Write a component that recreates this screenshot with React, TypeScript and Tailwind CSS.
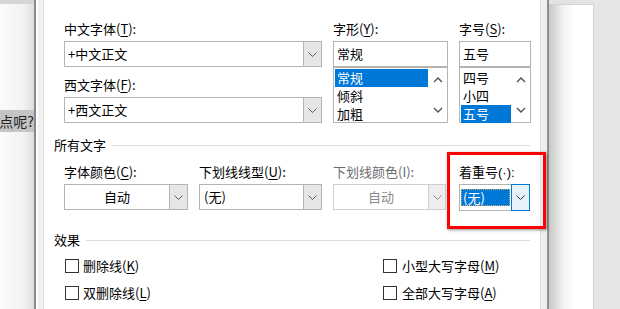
import React from "react";

const U = ({ children }: { children: React.ReactNode }) => (
  <span className="underline underline-offset-[2px]">{children}</span>
);

const ChevDown = ({ c = "#5a5a5a" }: { c?: string }) => (
  <svg width="9" height="5" viewBox="0 0 9 5">
    <path d="M0.5 0.5 L4.5 4.5 L8.5 0.5" fill="none" stroke={c} strokeWidth="1" />
  </svg>
);

const ScrollUp = () => (
  <svg width="10" height="6" viewBox="0 0 10 6">
    <path d="M1 5 L5 1 L9 5" fill="none" stroke="#505050" strokeWidth="1.4" />
  </svg>
);
const ScrollDown = () => (
  <svg width="10" height="6" viewBox="0 0 10 6">
    <path d="M1 1 L5 5 L9 1" fill="none" stroke="#505050" strokeWidth="1.4" />
  </svg>
);

const Label = ({ children, disabled }: { children: React.ReactNode; disabled?: boolean }) => (
  <div
    className={
      disabled
        ? "h-[16px] leading-[16px] text-[13px] mb-[4px] whitespace-nowrap text-[#6d6d6d]"
        : "h-[16px] leading-[16px] text-[13px] mb-[4px] whitespace-nowrap text-black"
    }
  >
    {children}
  </div>
);

const Check = ({ children, right }: { children: React.ReactNode; right?: boolean }) => (
  <div className={right ? "h-[18px] flex items-center gap-[5px]" : "h-[18px] flex items-center gap-[4px]"}>
    <div className="w-[14px] h-[14px] border border-[#333333] bg-white" />
    <span className="text-[13px] leading-[18px] text-black whitespace-nowrap">{children}</span>
  </div>
);

export default function App() {
  return (
    <div className="relative w-[620px] h-[309px] flex overflow-hidden bg-[#e6e6e6] font-['Noto_Sans_CJK_SC',sans-serif]">
      {/* left document strip */}
      <div className="w-[34px] flex flex-col">
        <div className="h-[4px] bg-[#d6d6d6]" />
        <div className="flex-1 flex flex-col bg-[linear-gradient(to_right,#fbfbfb,#f2f2f2_70%,#dedede)]">
          <div className="mt-[106px] h-[22px] bg-[#c4c4c4] flex justify-end overflow-hidden">
            <span className="text-[14px] leading-[22px] text-[#222] whitespace-nowrap">点呢?</span>
          </div>
        </div>
      </div>
      <div className="w-[2px] bg-[#8a8a8a]" />
      <div className="w-[8px] bg-[#f1f1f1] border-l-[2px] border-l-white border-r border-r-[#e2e2e2]" />

      {/* dialog body */}
      <div className="w-[496px] bg-white flex flex-col pt-[21px]">
        {/* row 1 */}
        <div className="flex pl-[20px]">
          <div className="w-[258px] flex flex-col">
            <Label>
              中文字体(<U>T</U>):
            </Label>
            <div className="h-[26px] flex border border-[#b4b4b4] bg-white">
              <div className="flex-1 pl-[3px] text-[13px] leading-[24px] text-black">+中文正文</div>
              <div className="w-[18px] border-l border-[#b4b4b4] bg-[#e6e6e6] flex items-center justify-center">
                <ChevDown />
              </div>
            </div>
            <div className="mt-[10px]">
              <Label>
                西文字体(<U>F</U>):
              </Label>
            </div>
            <div className="h-[26px] flex border border-[#b4b4b4] bg-white">
              <div className="flex-1 pl-[3px] text-[13px] leading-[24px] text-black">+西文正文</div>
              <div className="w-[18px] border-l border-[#b4b4b4] bg-[#e6e6e6] flex items-center justify-center">
                <ChevDown />
              </div>
            </div>
          </div>

          <div className="w-[115px] ml-[11px] flex flex-col">
            <Label>
              字形(<U>Y</U>):
            </Label>
            <div className="h-[26px] border border-[#b4b4b4] pl-[3px] text-[13px] leading-[24px] text-black">常规</div>
            <div className="h-[56px] border border-[#b4b4b4] flex bg-white">
              <div className="flex-1 p-[1px] flex flex-col text-[13px]">
                <div className="h-[18px] leading-[18px] pl-[2px] bg-[#0078d7] text-white">常规</div>
                <div className="h-[18px] leading-[18px] pl-[2px] text-black">倾斜</div>
                <div className="h-[18px] leading-[18px] pl-[2px] text-black">加粗</div>
              </div>
              <div className="w-[18px] flex flex-col items-center justify-between py-[9px]">
                <ScrollUp />
                <ScrollDown />
              </div>
            </div>
          </div>

          <div className="w-[72px] ml-[11px] flex flex-col">
            <Label>
              字号(<U>S</U>):
            </Label>
            <div className="h-[26px] border border-[#b4b4b4] pl-[3px] text-[13px] leading-[24px] text-black">五号</div>
            <div className="h-[56px] border border-[#b4b4b4] flex bg-white">
              <div className="flex-1 p-[1px] flex flex-col text-[13px]">
                <div className="h-[18px] leading-[18px] pl-[2px] text-black">四号</div>
                <div className="h-[18px] leading-[18px] pl-[2px] text-black">小四</div>
                <div className="h-[18px] leading-[18px] pl-[2px] bg-[#0078d7] text-white">五号</div>
              </div>
              <div className="w-[18px] flex flex-col items-center justify-between py-[9px]">
                <ScrollUp />
                <ScrollDown />
              </div>
            </div>
          </div>
        </div>

        {/* 所有文字 */}
        <div className="flex items-center h-[16px] pl-[10px] pr-[10px] mt-[14px]">
          <span className="text-[13px] leading-[16px] text-black whitespace-nowrap">所有文字</span>
          <div className="flex-1 h-px bg-[#dcdcdc] ml-[6px]" />
        </div>

        <div className="flex pl-[20px] mt-[11px]">
          <div className="w-[124px] flex flex-col">
            <Label>
              字体颜色(<U>C</U>):
            </Label>
            <div className="h-[26px] flex border border-[#b4b4b4] bg-white">
              <div className="flex-1 text-center text-[13px] leading-[24px] text-black">自动</div>
              <div className="w-[18px] border-l border-[#b4b4b4] bg-[#e6e6e6] flex items-center justify-center">
                <ChevDown />
              </div>
            </div>
          </div>
          <div className="w-[123px] ml-[11px] flex flex-col">
            <Label>
              下划线线型(<U>U</U>):
            </Label>
            <div className="h-[26px] flex border border-[#b4b4b4] bg-white">
              <div className="flex-1 pl-[4px] text-[13px] leading-[24px] text-black">(无)</div>
              <div className="w-[18px] border-l border-[#b4b4b4] bg-[#e6e6e6] flex items-center justify-center">
                <ChevDown />
              </div>
            </div>
          </div>
          <div className="w-[113px] ml-[11px] flex flex-col">
            <Label disabled>下划线颜色(I):</Label>
            <div className="h-[26px] flex border border-[#cfcfcf] bg-white">
              <div className="flex-1 text-center text-[13px] leading-[24px] text-[#8a8a8a]">自动</div>
              <div className="w-[17px] border-l border-[#cfcfcf] bg-[#eeeeee] flex items-center justify-center">
                <ChevDown c="#8a8a8a" />
              </div>
            </div>
          </div>
          <div className="w-[71px] ml-[13px] flex flex-col">
            <Label>
              着重号<span className="font-['Liberation_Sans',sans-serif]">(·):</span>
            </Label>
            <div className="h-[27px] flex border border-[#b4b4b4] bg-white">
              <div className="flex-1 p-[1px] py-[4px]">
                <div className="h-[17px] bg-[#0078d7] border border-dotted border-[#c8b070] pl-[1px] text-[13px] leading-[15px] text-white">
                  (无)
                </div>
              </div>
              <div className="w-[19px] -my-px -mr-px border border-[#0078d7] bg-[#e5f1fb] flex items-center justify-center">
                <ChevDown c="#333333" />
              </div>
            </div>
          </div>
        </div>

        {/* 效果 */}
        <div className="flex items-center h-[16px] pl-[10px] pr-[10px] mt-[21px]">
          <span className="text-[13px] leading-[16px] text-black whitespace-nowrap">效果</span>
          <div className="flex-1 h-px bg-[#dcdcdc] ml-[6px]" />
        </div>

        <div className="flex pl-[21px] mt-[9px]">
          <div className="w-[318px] flex flex-col gap-[9px]">
            <Check>
              删除线(<U>K</U>)
            </Check>
            <Check>
              双删除线(<U>L</U>)
            </Check>
          </div>
          <div className="flex flex-col gap-[9px]">
            <Check right>
              小型大写字母(<U>M</U>)
            </Check>
            <Check right>
              全部大写字母(<U>A</U>)
            </Check>
          </div>
        </div>
      </div>

      {/* right dialog frame */}
      <div className="w-[7px] bg-[#efefef] border-l border-[#e0e0e0]" />
      <div className="w-[2px] bg-[#8e8e8e]" />
      {/* right document page */}
      <div className="w-[45px] flex flex-col">
        <div className="h-[4px] bg-[#e3e3e3]" />
        <div className="flex-1 border-t border-r border-[#d4d4d4] bg-[linear-gradient(to_right,#c8c8c8,#f4f4f4_35%,#ffffff_60%)]" />
      </div>
      <div className="w-[26px] bg-[#e6e6e6]" />

      {/* red annotation box */}
      <div className="absolute left-[447px] top-[152px] w-[99px] h-[77px] border-[3px] border-[#ff0000] shadow-[1px_1px_3px_rgba(0,0,0,0.45)]" />
    </div>
  );
}
